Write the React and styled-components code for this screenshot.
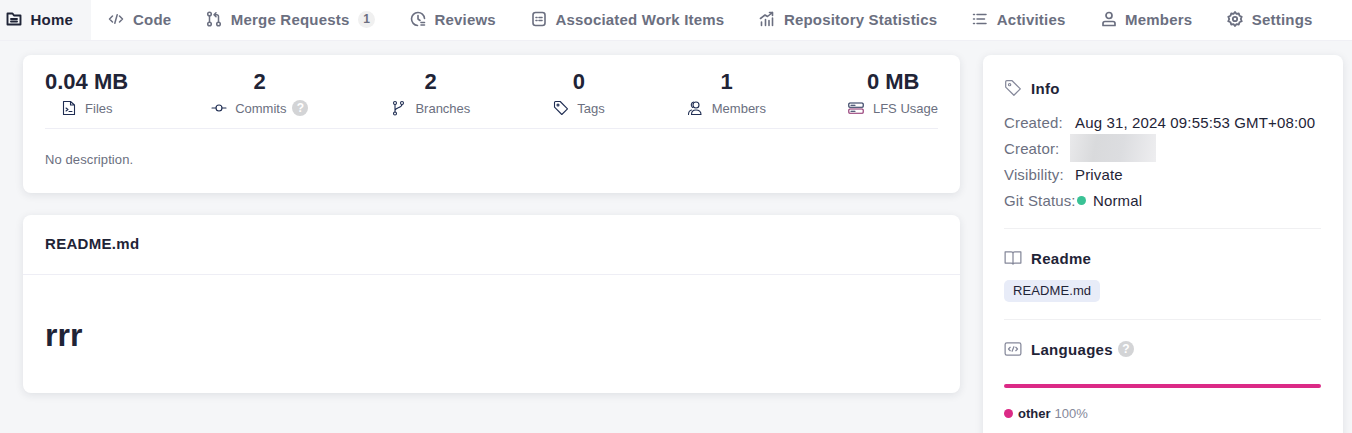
import React from 'react';
import styled, { createGlobalStyle } from 'styled-components';

const GlobalStyle = createGlobalStyle`
  html, body {
    margin: 0;
    padding: 0;
    height: 100%;
    overflow: hidden;
    background: #f5f6f8;
    font-family: 'Liberation Sans', Arial, sans-serif;
    color: #1f2437;
  }
`;

const Nav = styled.nav`
  display: flex;
  height: 40px;
  background: #fff;
  border-bottom: 1px solid #f0f0f5;
`;
const Tab = styled.div`
  display: flex;
  align-items: center;
  gap: 8.5px;
  box-sizing: border-box;
  height: 40px;
  padding: 0 ${(p) => p.$pr || 17.5}px 2px ${(p) => p.$pl || 17.5}px;
  background: ${(p) => (p.$active ? '#f5f6f8' : 'transparent')};
  color: ${(p) => (p.$active ? '#1f2437' : '#6b6f80')};
  font-size: 15px;
  font-weight: 700;
  letter-spacing: 0.2px;
  white-space: nowrap;
  svg { flex: none; }
`;
const Count = styled.span`
  display: inline-flex;
  align-items: center;
  justify-content: center;
  width: 17px;
  height: 17px;
  border-radius: 50%;
  background: #f0f0f0;
  font-size: 12px;
  letter-spacing: 0;
`;
const Page = styled.div`
  display: grid;
  grid-template-columns: 937px 360px;
  gap: 23px;
  padding: 14px 0 0 23px;
`;
const Column = styled.div`
  display: flex;
  flex-direction: column;
  gap: 22px;
`;
const Card = styled.section`
  background: #fff;
  border-radius: 8px;
  box-shadow: 0 2px 8px rgba(30, 35, 60, 0.1);
`;
const StatsCard = styled(Card)`
  height: 138px;
  padding: 14px 22px 0;
  box-sizing: border-box;
`;
const Stats = styled.div`
  display: flex;
  justify-content: space-between;
  height: 59px;
  border-bottom: 1px solid #eeeef5;
`;
const Stat = styled.div`
  display: flex;
  flex-direction: column;
  align-items: center;
`;
const StatValue = styled.div`
  height: 26px;
  line-height: 26px;
  font-size: 22px;
  font-weight: 700;
  color: #1f2437;
`;
const StatLabel = styled.div`
  display: flex;
  align-items: center;
  gap: 8.5px;
  margin-top: 3px;
  height: 20px;
  font-size: 13px;
  color: #6b6f80;
  white-space: nowrap;
`;
const Help = styled.span`
  display: inline-flex;
  align-items: center;
  justify-content: center;
  width: 16px;
  height: 16px;
  margin-left: ${(p) => p.$ml || 0}px;
  border-radius: 50%;
  background: #d3d4d6;
  color: #fff;
  font-size: 12px;
  font-weight: 700;
  letter-spacing: 0;
`;
const Description = styled.p`
  margin: 24px 0 0;
  font-size: 13px;
  letter-spacing: 0.1px;
  line-height: 14px;
  color: #6b6f80;
`;
const ReadmeCard = styled(Card)`
  height: 178px;
`;
const ReadmeHead = styled.div`
  height: 59px;
  padding: 0 22px;
  line-height: 57px;
  font-size: 15px;
  font-weight: 700;
  letter-spacing: 0.3px;
  border-bottom: 1px solid #eeeef5;
`;
const ReadmeTitle = styled.h1`
  margin: 42px 0 0 22px;
  font-size: 32px;
  line-height: 37px;
  font-weight: 700;
`;
const SideCard = styled(Card)`
  height: 420px;
  padding: 0 22px 0 21px;
  box-sizing: border-box;
`;
const Block = styled.div`
  padding: ${(p) => p.$pt}px 0 ${(p) => p.$pb}px;
  border-bottom: ${(p) => (p.$line ? '1px solid #f0f0f2' : 'none')};
`;
const BlockTitle = styled.h3`
  display: flex;
  align-items: center;
  gap: 9px;
  margin: 0;
  height: 18px;
  font-size: 15px;
  font-weight: 700;
  letter-spacing: 0.3px;
  color: #1f2437;
`;
const InfoList = styled.div`
  margin-top: 12px;
`;
const InfoRow = styled.div`
  display: flex;
  align-items: center;
  height: 26px;
  font-size: 15px;
  letter-spacing: 0.15px;
  white-space: nowrap;
`;
const InfoKey = styled.span`
  color: #6b6f80;
  width: ${(p) => p.$w || 71}px;
`;
const InfoValue = styled.span`
  color: #1f2437;
`;
const Blurred = styled.div`
  width: 86px;
  height: 28px;
  margin-left: -5px;
  background: linear-gradient(100deg, #e9e9eb, #d9dadc 30%, #dcdde0 60%, #eeeef0);
`;
const Dot = styled.span`
  width: 9px;
  height: 9px;
  border-radius: 50%;
  background: ${(p) => p.$color};
  margin-right: ${(p) => p.$mr}px;
  flex: none;
`;
const FileTag = styled.span`
  display: inline-block;
  margin-top: 13px;
  padding: 0 9px;
  height: 22px;
  line-height: 22px;
  border-radius: 5px;
  background: #e8ecf8;
  font-size: 13px;
  letter-spacing: 0.1px;
  color: #1f2437;
`;
const LangBar = styled.div`
  height: 4px;
  margin-top: 26px;
  border-radius: 2px;
  background: #db2a86;
`;
const LangRow = styled.div`
  display: flex;
  align-items: center;
  margin-top: 17px;
  height: 16px;
  font-size: 13px;
  font-weight: 700;
  color: #1f2437;
`;
const LangPct = styled.span`
  margin-left: 4px;
  font-weight: 400;
  color: #85889a;
`;

const Icon = ({ size = 16, children, color = 'currentColor', width = 1.5 }) => (
  <svg width={size} height={size} viewBox="0 0 16 16" fill="none" stroke={color} strokeWidth={width} strokeLinecap="round" strokeLinejoin="round">
    {children}
  </svg>
);

const icons = {
  home: (
    <Icon width={1.9}>
      <path d="M1.5 13.5V2.5h5l1.5 2h6.5v9z" />
      <path d="M5 8h6M5 10.5h6" />
    </Icon>
  ),
  code: (
    <Icon>
      <path d="M4.5 5 1.5 8l3 3M11.5 5l3 3-3 3M9.2 3.8 6.8 12.2" />
    </Icon>
  ),
  merge: (
    <Icon>
      <circle cx="3.5" cy="3" r="1.8" />
      <circle cx="3.5" cy="13" r="1.8" />
      <circle cx="12.5" cy="13" r="1.8" />
      <path d="M3.5 4.8v6.4M12.5 11.2V5.5c0-1-.7-1.7-1.7-1.7H8.500M10 1.800 8 3.800l2 2" />
    </Icon>
  ),
  reviews: (
    <Icon width={1.6}>
      <path d="M14.5 7.500A6.500 6.500 0 1 0 7.500 14.500" />
      <path d="M8 4.500V8l2 1.500M11 11.500h3.500M11 14h3.500" />
    </Icon>
  ),
  items: (
    <Icon width={1.6}>
      <rect x="2" y="1.5" width="12" height="13" rx="2.5" />
      <path d="M5 6.5h1M8 6.5h3M5 9.500h1M8 9.500h3" />
    </Icon>
  ),
  stats: (
    <Icon width={1.6}>
      <path d="M1.5 7.500 6 4l2.500 1.500 5-4M10.500 1.500h3v3M2.500 11v3.500M6.500 8.500v6M10 9.500v5M13.500 7v7.500" />
    </Icon>
  ),
  activities: (
    <Icon>
      <path d="M1.5 3.500h1M1.500 8h1M1.500 12.500h1M5 3.500h9M5 8h7.500M5 12.500h9" />
    </Icon>
  ),
  members: (
    <Icon width={1.7}>
      <circle cx="8" cy="4.500" r="3" />
      <path d="M2 14.500v-2c0-1.200.8-2 2-2h8c1.200 0 2 .8 2 2v2z" />
    </Icon>
  ),
  settings: (
    <Icon width={1.8}>
      <circle cx="8" cy="8" r="2.200" />
      <path d="M8 1 9.500 2.800l2.300-.3.700 2.200 2.200 1-.9 2.300.9 2.300-2.200 1-.7 2.200-2.300-.3L8 15l-1.500-1.800-2.300.3-.7-2.200-2.200-1 .9-2.300-.9-2.300 2.200-1 .7-2.200 2.300.3z" />
    </Icon>
  ),
};

const tabs = [
  { label: 'Home', icon: 'home', active: true, pl: 6, pr: 18 },
  { label: 'Code', icon: 'code' },
  { label: 'Merge Requests', icon: 'merge', count: 1 },
  { label: 'Reviews', icon: 'reviews' },
  { label: 'Associated Work Items', icon: 'items' },
  { label: 'Repository Statistics', icon: 'stats' },
  { label: 'Activities', icon: 'activities' },
  { label: 'Members', icon: 'members' },
  { label: 'Settings', icon: 'settings' },
];

const TagIcon = ({ color, size }) => (
  <Icon color={color} size={size} width={1.1}>
    <path d="M1.500 2.500c0-.6.4-1 1-1h4.700l7.300 7.300-5.700 5.700-7.300-7.300z" />
    <circle cx="5" cy="5" r="1" />
  </Icon>
);

const stats = [
  {
    value: '0.04 MB',
    label: 'Files',
    icon: (
      <Icon color="#1f2d52" width={1.1}>
        <path d="M2.500 1.500h7l4 3.500v9.500h-11zM9.500 1.500V5h4M5 8l2 1.500L5 11M8 11.500h3" />
      </Icon>
    ),
  },
  {
    value: '2',
    label: 'Commits',
    help: true,
    icon: (
      <Icon color="#1f2d52" width={1.1}>
        <circle cx="8" cy="8" r="3" />
        <path d="M1 8h4M11 8h4" />
      </Icon>
    ),
  },
  {
    value: '2',
    label: 'Branches',
    icon: (
      <Icon color="#1f2d52" width={1.1}>
        <circle cx="4" cy="3" r="1.500" />
        <circle cx="11" cy="3" r="1.500" />
        <circle cx="4" cy="13.500" r="1.500" />
        <path d="M4 4.500v7.500M11 4.500c0 3.500-7 3-7 6" />
      </Icon>
    ),
  },
  { value: '0', label: 'Tags', icon: <TagIcon color="#1f2d52" /> },
  {
    value: '1',
    label: 'Members',
    icon: (
      <Icon color="#1f2d52" width={1.1}>
        <circle cx="9" cy="5" r="3" />
        <path d="M6.500 2C4 2.500 3.500 6 5.500 7.500M1.500 14.500c0-2.500 1-4 3-4.500M4.500 14.500c0-3 1.500-4.500 4.500-4.500s5 1.500 5 4.500z" />
      </Icon>
    ),
  },
  {
    value: '0 MB',
    label: 'LFS Usage',
    icon: (
      <Icon color="#1f2d52" width={1.1}>
        <rect x="0.800" y="3" width="14.400" height="4.300" rx="1" />
        <rect x="0.800" y="9" width="14.400" height="4.300" rx="1" stroke="#8a2a6a" />
        <path d="M3 5.200h4M3 11.200h4" />
      </Icon>
    ),
  },
];

const App = () => (
  <>
    <GlobalStyle />
    <Nav>
      {tabs.map((tab) => (
        <Tab key={tab.label} $active={tab.active} $pl={tab.pl} $pr={tab.pr}>
          {icons[tab.icon]}
          <span>{tab.label}</span>
          {tab.count && <Count>{tab.count}</Count>}
        </Tab>
      ))}
    </Nav>
    <Page>
      <Column>
        <StatsCard>
          <Stats>
            {stats.map((stat) => (
              <Stat key={stat.label}>
                <StatValue>{stat.value}</StatValue>
                <StatLabel>
                  {stat.icon}
                  <span>{stat.label}</span>
                  {stat.help && <Help $ml={-2.5}>?</Help>}
                </StatLabel>
              </Stat>
            ))}
          </Stats>
          <Description>No description.</Description>
        </StatsCard>
        <ReadmeCard>
          <ReadmeHead>README.md</ReadmeHead>
          <ReadmeTitle>rrr</ReadmeTitle>
        </ReadmeCard>
      </Column>
      <SideCard>
        <Block $pt={24} $pb={15} $line>
          <BlockTitle>
            <TagIcon color="#85889a" size={18} />
            Info
          </BlockTitle>
          <InfoList>
            <InfoRow>
              <InfoKey>Created:</InfoKey>
              <InfoValue>Aug 31, 2024 09:55:53 GMT+08:00</InfoValue>
            </InfoRow>
            <InfoRow>
              <InfoKey>Creator:</InfoKey>
              <Blurred />
            </InfoRow>
            <InfoRow>
              <InfoKey>Visibility:</InfoKey>
              <InfoValue>Private</InfoValue>
            </InfoRow>
            <InfoRow>
              <InfoKey $w={73}>Git Status:</InfoKey>
              <Dot $color="#3ac295" $mr={7} />
              <InfoValue>Normal</InfoValue>
            </InfoRow>
          </InfoList>
        </Block>
        <Block $pt={20} $pb={17} $line>
          <BlockTitle>
            <Icon size={18} color="#85889a" width={1.1}>
              <path d="M1 2.500h5.500c.9 0 1.500.5 1.500 1.500v9.500c0-.7-.6-1-1.500-1H1zM15 2.500H9.500C8.600 2.500 8 3 8 4M15 2.500v10H9.500c-.9 0-1.500.3-1.500 1" />
            </Icon>
            Readme
          </BlockTitle>
          <FileTag>README.md</FileTag>
        </Block>
        <Block $pt={20} $pb={0}>
          <BlockTitle>
            <Icon size={18} color="#85889a" width={1.1}>
              <rect x="1" y="2.500" width="14" height="11" rx="1.500" />
              <path d="M5.500 6.500 4 8l1.500 1.500M10.500 6.500 12 8l-1.500 1.500M8.800 6 7.200 10" />
            </Icon>
            Languages
            <Help $ml={-4}>?</Help>
          </BlockTitle>
          <LangBar />
          <LangRow>
            <Dot $color="#db2a86" $mr={5} />
            other
            <LangPct>100%</LangPct>
          </LangRow>
        </Block>
      </SideCard>
    </Page>
  </>
);

export default App;
